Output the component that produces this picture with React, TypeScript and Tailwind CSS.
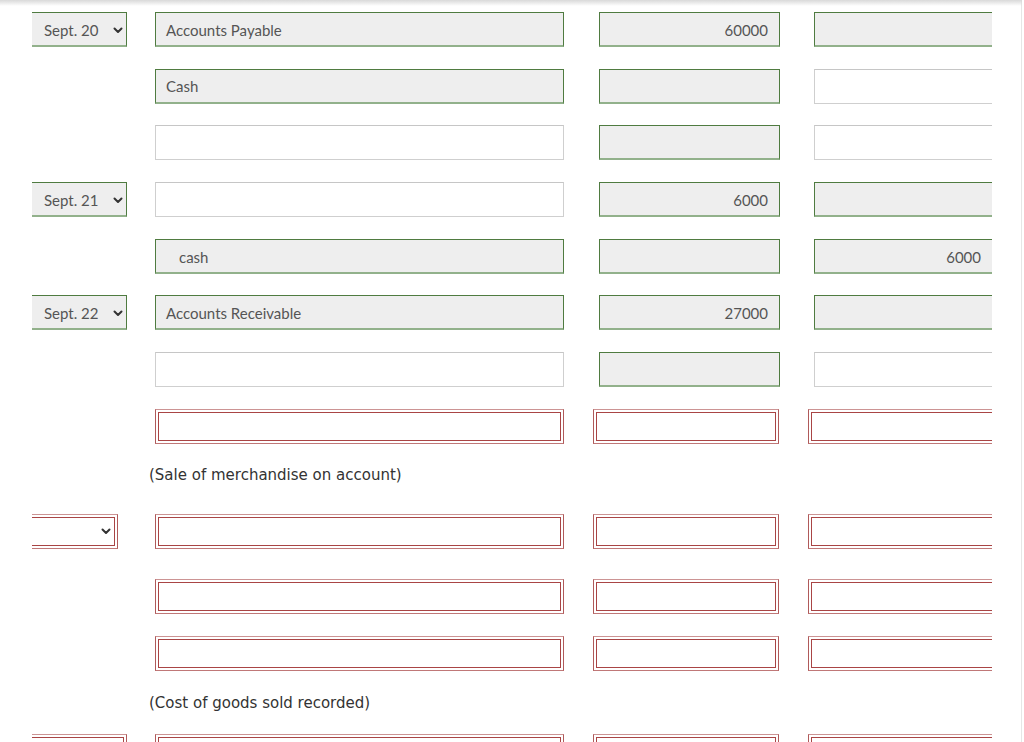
import React from "react";

const lato = { fontFamily: "Lato, 'Open Sans', sans-serif" };

function Chevron() {
  return (
    <svg width="10" height="7" viewBox="0 0 10 7" className="shrink-0">
      <polyline points="1.5,1.5 5,5 8.5,1.5" fill="none" stroke="#333" strokeWidth="2" strokeLinecap="round" strokeLinejoin="round" />
    </svg>
  );
}

type Kind = "green" | "white";

function Field({ kind, text = "", align = "left", w, indent = false, noLeft = false, noRight = false, select = false }: { kind: Kind; text?: string; align?: "left" | "right"; w: string; indent?: boolean; noLeft?: boolean; noRight?: boolean; select?: boolean }) {
  const base =
    kind === "green"
      ? "bg-[#eeeeee] border border-[#4f7b40] border-b-2 border-b-[#92b18b]"
      : "bg-white border border-[#cfcfcf] border-t-[#c6c6c6]";
  return (
    <div
      className={`${w} h-[35px] shrink-0 flex items-center pt-[2px] ${base} ${noLeft ? "border-l-0" : ""} ${noRight ? "border-r-0" : ""} ${align === "right" ? "justify-end pr-[11px]" : indent ? "pl-[23px]" : select ? "pl-[12px] pr-[3px] justify-between" : "pl-[10px]"} text-[15px] text-[#555]`}
      style={lato}
    >
      <span>{text}</span>
      {select && <Chevron />}
    </div>
  );
}

function RedField({ w, noLeft = false, noRight = false, select = false }: { w: string; noLeft?: boolean; noRight?: boolean; select?: boolean }) {
  return (
    <div
      className={`${w} h-[35px] shrink-0 border border-[#b05a5a] border-t-[#cc9494] border-b-[#c07878] bg-white p-[2px] ${noLeft ? "border-l-0 pl-0" : ""} ${noRight ? "border-r-0 pr-0" : ""}`}
    >
      <div className={`h-full w-full border border-[#a94545] ${noLeft ? "border-l-0" : ""} ${noRight ? "border-r-0" : ""} flex items-center justify-end pr-[3px]`}>
        {select && <Chevron />}
      </div>
    </div>
  );
}

function GreenRow({ date, acct, debit, credit, mt }: { date?: string; acct: [Kind, string, boolean?]; debit: [Kind, string]; credit: [Kind, string]; mt: string }) {
  return (
    <div className={`flex ${mt}`}>
      <div className="w-[95px] shrink-0">
        {date && <Field kind="green" text={date} w="w-[95px]" noLeft select />}
      </div>
      <div className="ml-[28px]">
        <Field kind={acct[0]} text={acct[1]} w="w-[409px]" indent={!!acct[2]} />
      </div>
      <div className="ml-[35px]">
        <Field kind={debit[0]} text={debit[1]} w="w-[181px]" align="right" />
      </div>
      <div className="ml-[34px]">
        <Field kind={credit[0]} text={credit[1]} w="w-[178px]" align="right" noRight />
      </div>
    </div>
  );
}

function RedRow({ mt, date = false, dateW = "w-[86px]", dateSelect = false }: { mt: string; date?: boolean; dateW?: string; dateSelect?: boolean }) {
  const dw = dateW === "w-[95px]" ? 95 : 86;
  return (
    <div className={`flex ${mt}`}>
      <div className={`${dateW} shrink-0`}>
        {date && <RedField w={dateW} noLeft select={dateSelect} />}
      </div>
      <div className={dw === 95 ? "ml-[28px]" : "ml-[37px]"}>
        <RedField w="w-[409px]" />
      </div>
      <div className="ml-[29px]">
        <RedField w="w-[186px]" />
      </div>
      <div className="ml-[29px]">
        <RedField w="w-[184px]" noRight />
      </div>
    </div>
  );
}

function Label({ text, mt }: { text: string; mt: string }) {
  return (
    <div
      className={`${mt} ml-[117px] h-[20px] leading-[20px] text-[15px] text-[#333]`}
      style={{ fontFamily: "'DejaVu Sans', Verdana, sans-serif" }}
    >
      {text}
    </div>
  );
}

export default function App() {
  return (
    <div className="relative w-[1024px] h-[742px] overflow-hidden bg-white">
      <div className="w-[1022px] h-full border-r border-[#e6e6e6] pl-[32px] pt-[12px] flex flex-col">
        <GreenRow mt="mt-0" date="Sept. 20" acct={["green", "Accounts Payable"]} debit={["green", "60000"]} credit={["green", ""]} />
        <GreenRow mt="mt-[21.7px]" acct={["green", "Cash"]} debit={["green", ""]} credit={["white", ""]} />
        <GreenRow mt="mt-[21.7px]" acct={["white", ""]} debit={["green", ""]} credit={["white", ""]} />
        <GreenRow mt="mt-[21.7px]" date="Sept. 21" acct={["white", ""]} debit={["green", "6000"]} credit={["green", ""]} />
        <GreenRow mt="mt-[21.7px]" acct={["green", "cash", true]} debit={["green", ""]} credit={["green", "6000"]} />
        <GreenRow mt="mt-[21.7px]" date="Sept. 22" acct={["green", "Accounts Receivable"]} debit={["green", "27000"]} credit={["green", ""]} />
        <GreenRow mt="mt-[21.7px]" acct={["white", ""]} debit={["green", ""]} credit={["white", ""]} />
        <RedRow mt="mt-[21.7px]" />
        <Label mt="mt-[21px]" text="(Sale of merchandise on account)" />
        <RedRow mt="mt-[29px]" date dateSelect />
        <RedRow mt="mt-[30px]" />
        <RedRow mt="mt-[22px]" />
        <Label mt="mt-[22px]" text="(Cost of goods sold recorded)" />
        <RedRow mt="mt-[21px]" date dateW="w-[95px]" />
      </div>
      <div className="absolute left-0 top-0 w-[1022px] h-[6px] bg-gradient-to-b from-[#d9d9d9] to-transparent pointer-events-none" />
    </div>
  );
}
